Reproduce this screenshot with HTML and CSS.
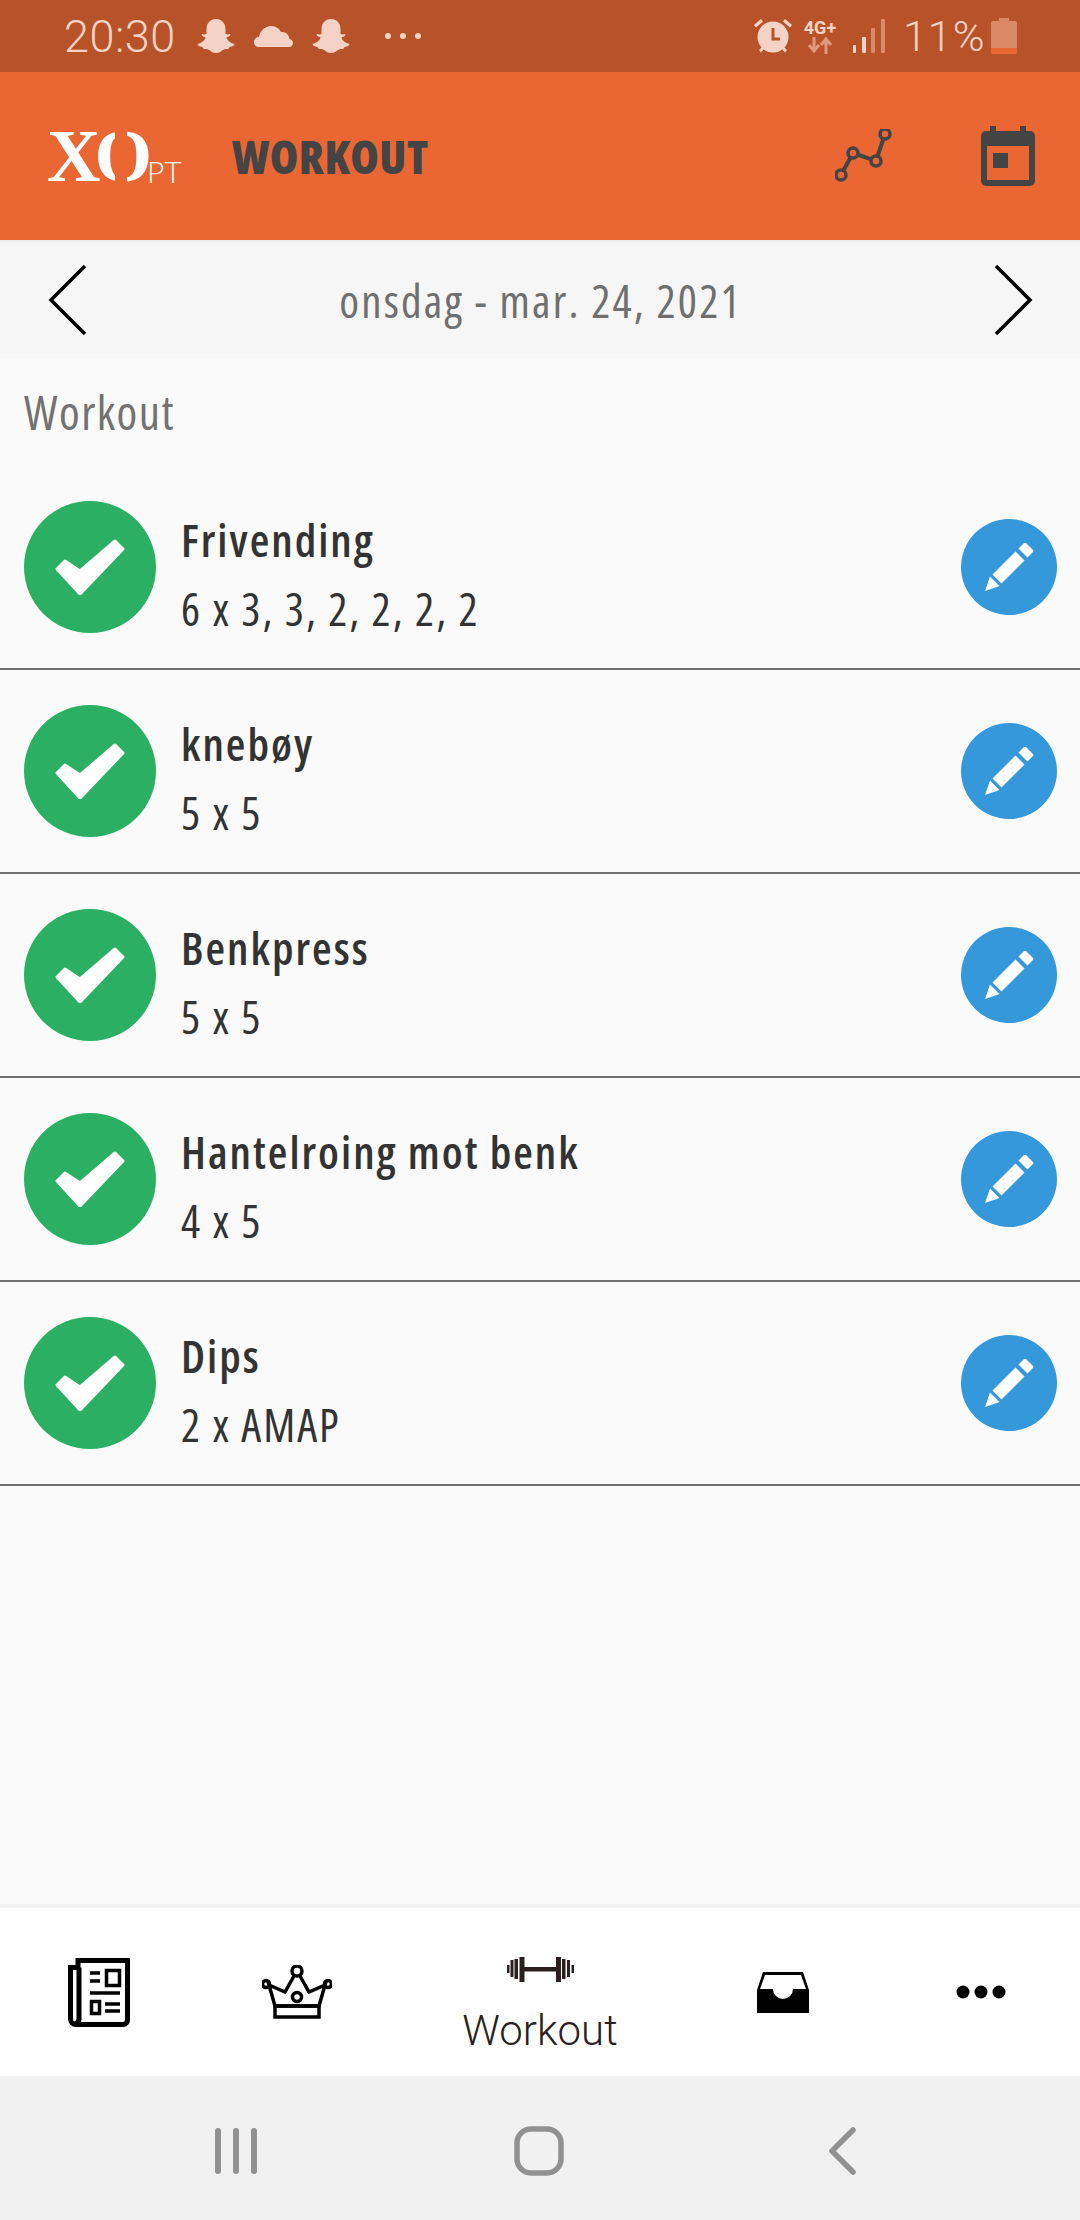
FILE: index.html
```html
<!DOCTYPE html>
<html lang="en">
<head>
    <meta charset="UTF-8">
    <meta name="viewport" content="width=device-width, initial-scale=1.0">
    <title>XO PT Workout</title>
    <link rel="stylesheet" href="styles.css">
</head>
<body>
    <div id="phone">
        <!-- Android status bar -->
        <div class="status-bar">
            <span class="clock">20:30</span>
            <svg class="st-ghost" width="38" height="36" viewBox="0 0 38 36"><path d="M19 1c6 0 9.500 4.500 9.500 10v5c1.500.5 3 .5 4 0 1 0 1.200 1 .5 1.500-1 1-2.500 1.500-3.500 2 .5 3 4 5.500 8 6.500 0 1.500-2 2.500-5 3-.5 1.500-1 2-2.500 2-2 0-4 .5-5.500 2-1.500 1.200-3 2-5.500 2s-4-.8-5.500-2c-1.500-1.500-3.500-2-5.500-2-1.500 0-2-.5-2.500-2-3-.5-5-1.500-5-3 4-1 7.500-3.500 8-6.500-1-.5-2.500-1-3.500-2-.7-.5-.5-1.500.5-1.500 1 .5 2.500.5 4 0v-5C9.500 5.500 13 1 19 1z"/></svg>
            <svg class="st-cloud" width="39" height="22" viewBox="0 0 39 22"><path d="M5 22c-3 0-5-2-5-5s2.500-5 5-5c1-6 6-11 12-11 5 0 8.500 3 10 6 5-.5 8 3 8.500 7 2 .5 3.500 2 3.500 4s-1.500 4-4 4z"/></svg>
            <svg class="st-ghost st-ghost2" width="38" height="36" viewBox="0 0 38 36"><path d="M19 1c6 0 9.500 4.500 9.500 10v5c1.500.5 3 .5 4 0 1 0 1.200 1 .5 1.500-1 1-2.500 1.500-3.500 2 .5 3 4 5.500 8 6.500 0 1.500-2 2.500-5 3-.5 1.500-1 2-2.500 2-2 0-4 .5-5.500 2-1.500 1.200-3 2-5.500 2s-4-.8-5.500-2c-1.500-1.500-3.500-2-5.500-2-1.500 0-2-.5-2.500-2-3-.5-5-1.500-5-3 4-1 7.500-3.500 8-6.500-1-.5-2.500-1-3.500-2-.7-.5-.5-1.500.5-1.500 1 .5 2.500.5 4 0v-5C9.500 5.500 13 1 19 1z"/></svg>
            <svg class="st-dots" width="38" height="8" viewBox="0 0 38 8"><circle cx="4" cy="4" r="3"/><circle cx="19" cy="4" r="3"/><circle cx="34" cy="4" r="3"/></svg>
            <span class="spacer"></span>
            <svg class="st-alarm" width="38" height="36" viewBox="0 0 38 36"><circle cx="19" cy="19" r="15.500"/><path d="M0 7l7-6 2 2.500-7 6zM38 7l-7-6-2 2.500 7 6zM5 32l3-3 2 2-3 3.500zM33 32l-3-3-2 2 3 3.500z"/><path d="M19 10v11h7" fill="none" stroke="#b85228" stroke-width="3"/></svg>
            <span class="net"><span class="net-label">4G+</span><svg width="26" height="17" viewBox="0 0 26 17"><path d="M7 0v13M2 8l5 6 5-6M19 17V3M14 8l5-6 5 6" fill="none" stroke="#e09a7c" stroke-width="3"/></svg></span>
            <svg class="st-signal" width="32" height="34" viewBox="0 0 32 34"><rect x="0" y="26" width="3" height="8" rx="1" fill="#f4d3c6"/><rect x="9" y="18" width="4" height="16" rx="1" fill="#f4d3c6"/><rect x="18" y="9" width="4" height="25" rx="1" fill="#d98a69"/><rect x="28" y="0" width="4" height="34" rx="1" fill="#d98a69"/></svg>
            <span class="battery-pct">11%</span>
            <svg class="st-battery" width="26" height="36" viewBox="0 0 26 36"><path d="M8 0h10v3h6a2 2 0 0 1 2 2v25H0V5a2 2 0 0 1 2-2h6z" fill="#d98a69"/><path d="M0 30h26v4a2 2 0 0 1-2 2H2a2 2 0 0 1-2-2z" fill="#ea6633"/></svg>
        </div>

        <div class="app-header">
            <div class="logo"><span class="logo-xo">XO</span><span class="logo-pt">PT</span></div>
            <div class="app-title">WORKOUT</div>
            <svg class="hd-graph" width="58" height="54" viewBox="0 0 58 54">
                <path d="M6 46L18 24l23 8 9-27" fill="none" stroke="#444" stroke-width="4"/>
                <circle cx="6" cy="46" r="5" fill="#ea6633" stroke="#444" stroke-width="3.500"/>
                <circle cx="18" cy="24" r="5" fill="#ea6633" stroke="#444" stroke-width="3.500"/>
                <circle cx="41" cy="32" r="5" fill="#ea6633" stroke="#444" stroke-width="3.500"/>
                <circle cx="50" cy="5" r="5" fill="#ea6633" stroke="#444" stroke-width="3.500"/>
            </svg>
            <svg class="hd-cal" width="54" height="60" viewBox="0 0 54 60"><path d="M5 5h4V0h6v5h24V0h6v5h4a5 5 0 0 1 5 5v45a5 5 0 0 1-5 5H5a5 5 0 0 1-5-5V10a5 5 0 0 1 5-5zm1 15v34h42V20z" fill="#444" fill-rule="evenodd"/><rect x="12" y="27" width="15" height="15" fill="#444"/></svg>
        </div>

        <div class="date-bar">
            <svg width="40" height="72" viewBox="0 0 40 72"><path d="M37 2L3 36l34 34" fill="none" stroke="#000" stroke-width="3.500"/></svg>
            <span class="date-text">onsdag - mar. 24, 2021</span>
            <svg width="40" height="72" viewBox="0 0 40 72"><path d="M3 2l34 34L3 70" fill="none" stroke="#000" stroke-width="3.500"/></svg>
        </div>

        <div class="content">
            <div class="section-title">Workout</div>
            <div id="list"></div>
        </div>

        <div class="tab-bar">
            <div class="tab">
                <svg width="62" height="69" viewBox="0 0 62 69" fill="none" stroke="#000" stroke-width="5"><path d="M10 2.500h49.500V62a4.500 4.500 0 0 1-4.500 4.500H8A5.500 5.500 0 0 1 2.500 61V9.500H10zM11 9.500V61a5.500 5.500 0 0 1-4 5"/><path d="M22 15h10M22 23h10M22 35h30M37 46h15M37 53h15" stroke-width="3.500"/><rect x="38.500" y="12.500" width="13" height="15" stroke-width="3.500"/><rect x="23.500" y="43.500" width="8" height="12" stroke-width="3.500"/></svg>
            </div>
            <div class="tab">
                <svg width="70" height="54" viewBox="0 0 70 54" fill="none" stroke="#000" stroke-width="3.500"><circle cx="35" cy="6" r="5"/><circle cx="4" cy="19" r="3.500"/><circle cx="66" cy="19" r="3.500"/><circle cx="35" cy="32" r="4.500"/><path d="M32 11L23 27 7 20l6 21h44l6-21-16 7-9-16"/><rect x="13" y="41" width="44" height="11"/></svg>
            </div>
            <div class="tab tab-active">
                <svg width="67" height="25" viewBox="0 0 67 25" fill="#2b1f1f"><rect x="0" y="8" width="2.500" height="8"/><rect x="3.500" y="3" width="3" height="17"/><rect x="7.500" y="2" width="3.500" height="20"/><rect x="12.500" y="0" width="5" height="25"/><rect x="17" y="10" width="32" height="4.500"/><rect x="49" y="0" width="5" height="25"/><rect x="55" y="2" width="3.500" height="20"/><rect x="60" y="3" width="3" height="17"/><rect x="64.500" y="8" width="2.500" height="8"/></svg>
                <span class="tab-label">Workout</span>
            </div>
            <div class="tab">
                <svg width="52" height="41" viewBox="0 0 52 41"><path d="M6 0h40l6 18v23H0V18zM8 3L3 17h13a10 10 0 0 0 20 0h13L44 3z" fill="#000" fill-rule="evenodd"/></svg>
            </div>
            <div class="tab">
                <svg width="50" height="14" viewBox="0 0 50 14"><circle cx="7" cy="7" r="6.500"/><circle cx="25" cy="7" r="6.500"/><circle cx="43" cy="7" r="6.500"/></svg>
            </div>
        </div>

        <div class="nav-bar">
            <svg width="44" height="46" viewBox="0 0 44 46" fill="#919191"><rect x="0" y="0" width="6" height="46" rx="3"/><rect x="18" y="0" width="6" height="46" rx="3"/><rect x="36" y="0" width="6" height="46" rx="3"/></svg>
            <svg class="nav-home" width="50" height="50" viewBox="0 0 50 50"><rect x="3" y="3" width="44" height="44" rx="14" fill="none" stroke="#919191" stroke-width="5.500"/></svg>
            <svg class="nav-back" width="28" height="48" viewBox="0 0 28 48"><path d="M25 3L4 24l21 21" fill="none" stroke="#919191" stroke-width="5.500" stroke-linecap="round" stroke-linejoin="round"/></svg>
        </div>
    </div>

    <script>
        // The exercises of the day
        const exercises = [
            { name: "Frivending", sets: "6 x 3, 3, 2, 2, 2, 2" },
            { name: "knebøy", sets: "5 x 5" },
            { name: "Benkpress", sets: "5 x 5" },
            { name: "Hantelroing mot benk", sets: "4 x 5" },
            { name: "Dips", sets: "2 x AMAP" }
        ];

        const checkIcon = '<svg width="70" height="56" viewBox="0 0 70 56"><path d="M2 30l8-8 15 10L60 2l8 8-43 45z" fill="#fff" stroke="#fff" stroke-width="3" stroke-linejoin="round"/></svg>';
        const pencilIcon = '<svg width="49" height="48" viewBox="0 0 49 48" fill="#fff"><path d="M0 48l5-14.500L14.500 43z"/><path d="M7.500 31.500l9 9 23-23-9-9z"/><path d="M33.500 5.500l9 9 5-5a2 2 0 0 0 0-3l-6-6a2 2 0 0 0-3 0z"/></svg>';

        // Build one row per exercise
        const list = document.getElementById('list');
        exercises.forEach(function (item) {
            const row = document.createElement('div');
            row.className = 'row';
            row.innerHTML =
                '<div class="check">' + checkIcon + '</div>' +
                '<div class="row-text"><div class="row-name">' + item.name + '</div>' +
                '<div class="row-sets">' + item.sets + '</div></div>' +
                '<div class="edit">' + pencilIcon + '</div>';
            list.appendChild(row);
        });
    </script>
</body>
</html>
```

FILE: styles.css
```css
body {
    margin: 0;
    padding: 0;
    background: #fafafa;
    font-family: "Open Sans", "Liberation Sans", sans-serif;
    font-stretch: 75%;
    overflow: hidden;
}
#phone {
    width: 1080px;
    height: 2220px;
    display: flex;
    flex-direction: column;
}
.status-bar {
    height: 72px;
    flex: none;
    display: flex;
    align-items: center;
    padding: 0 63px 0 64px;
    box-sizing: border-box;
    background: #b85228;
    color: #f4d3c6;
    fill: #f4d3c6;
    font-family: Roboto, sans-serif;
    font-stretch: normal;
}
.clock {
    font-size: 45px;
    font-weight: 300;
    letter-spacing: 0.5px;
    width: 133px;
}
.st-cloud {
    margin-left: 19px;
}
.st-ghost2 {
    margin-left: 19px;
}
.st-dots {
    margin-left: 34px;
}
.spacer {
    flex: 1;
}
.net {
    display: flex;
    flex-direction: column;
    align-items: center;
    margin-left: 10px;
    width: 36px;
}
.net-label {
    font-size: 18px;
    font-weight: 700;
    line-height: 19px;
}
.st-signal {
    margin-left: 15px;
}
.battery-pct {
    width: 78px;
    font-size: 43px;
    font-weight: 300;
    letter-spacing: 1px;
    margin-left: 18px;
}
.st-battery {
    margin-left: 10px;
}
.app-header {
    height: 168px;
    flex: none;
    display: flex;
    align-items: center;
    padding: 0 45px 0 47px;
    box-sizing: border-box;
    background: #ea6633;
}
.logo {
    width: 185px;
    display: flex;
    align-items: flex-end;
    color: #fff;
}
.logo-xo {
    position: relative;
    font-family: "Liberation Serif", serif;
    font-weight: 700;
    font-size: 74px;
    line-height: 74px;
    letter-spacing: -6px;
    font-stretch: normal;
}
/* cut through the O, the logo is a stencil */
.logo-xo::after {
    content: "";
    position: absolute;
    left: 68px;
    top: 8px;
    width: 12px;
    height: 60px;
    background: #ea6633;
}
.logo-pt {
    font-family: Lato, sans-serif;
    font-weight: 300;
    font-size: 30px;
    line-height: 44px;
    margin-left: 1px;
    font-stretch: normal;
}
.app-title {
    flex: 1;
    font-size: 46px;
    font-weight: 800;
    letter-spacing: 0.5px;
    color: #444;
}
.hd-cal {
    margin-left: 88px;
}
.date-bar {
    height: 118px;
    flex: none;
    display: flex;
    align-items: center;
    justify-content: space-between;
    padding: 2px 47px 0 48px;
    box-sizing: border-box;
    background: #f6f6f6;
    box-shadow: inset 0 5px 4px -4px #e4e4e4;
}
.date-text {
    font-size: 45px;
    color: #6f6f6f;
    letter-spacing: 2.2px;
}
.content {
    flex: 1;
    background: #fafafa;
}
.section-title {
    height: 108px;
    padding: 28px 0 0 24px;
    box-sizing: border-box;
    font-size: 47px;
    line-height: 52px;
    letter-spacing: 1.5px;
    color: #727272;
}
.row {
    height: 204px;
    display: flex;
    align-items: center;
    padding: 0 23px 0 24px;
    box-sizing: border-box;
    border-bottom: 2px solid #707070;
}
.check {
    width: 132px;
    height: 132px;
    border-radius: 50%;
    background: #2bb063;
    display: flex;
    align-items: center;
    justify-content: center;
}
.row-text {
    flex: 1;
    margin: 14px 0 0 25px;
    color: #333;
}
.row-name {
    font-size: 45px;
    font-weight: 600;
    line-height: 68px;
    letter-spacing: 2px;
}
.row-sets {
    font-size: 45px;
    line-height: 69px;
    letter-spacing: 2px;
}
.edit {
    width: 96px;
    height: 96px;
    border-radius: 50%;
    background: #3498db;
    display: flex;
    align-items: center;
    justify-content: center;
}
.tab-bar {
    height: 172px;
    flex: none;
    display: flex;
    background: #fff;
    border-top: 4px solid #f2f2f2;
    box-sizing: border-box;
    color: #2b1f1f;
}
.tab {
    width: 198px;
    display: flex;
    flex-direction: column;
    align-items: center;
    justify-content: center;
}
.tab-active {
    width: 288px;
    justify-content: flex-start;
    padding-top: 49px;
    box-sizing: border-box;
}
.tab-label {
    font-family: Roboto, sans-serif;
    font-stretch: normal;
    font-weight: 300;
    font-size: 42px;
    line-height: 50px;
    margin-top: 24px;
}
.nav-bar {
    height: 144px;
    flex: none;
    display: flex;
    align-items: center;
    background: #f1f1f1;
    padding: 6px 0 0 215px;
    box-sizing: border-box;
}
.nav-home {
    margin-left: 255px;
}
.nav-back {
    margin-left: 264px;
}
```
